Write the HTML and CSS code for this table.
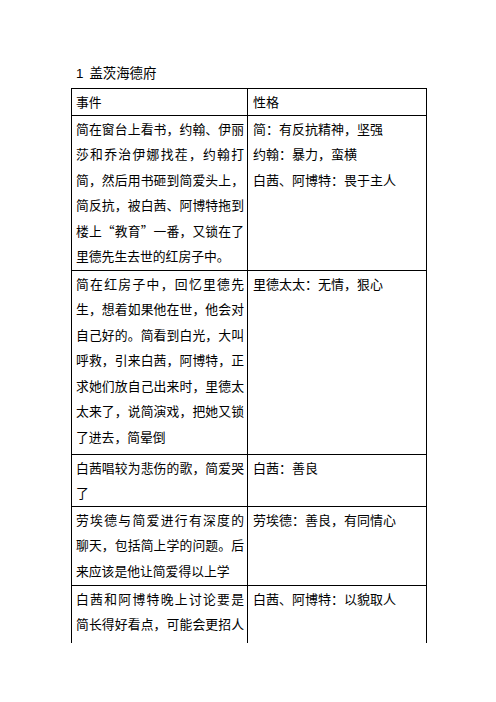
FILE: index.html
```html
<!DOCTYPE html>
<html lang="zh-CN">
<head>
<meta charset="utf-8">
<title>盖茨海德府</title>
<link rel="stylesheet" href="styles.css">
</head>
<body>
<div class="page">
  <p class="title"><span class="num">1</span>盖茨海德府</p>
  <table class="tbl">
    <colgroup><col class="c1"><col class="c2"></colgroup>
    <tr class="rh">
      <td class="ev">事件</td>
      <td class="tr">性格</td>
    </tr>
    <tr class="r1">
      <td class="ev">
        <span class="ln j">简在窗台上看书，约翰、伊丽</span>
        <span class="ln j">莎和乔治伊娜找茬，约翰打</span>
        <span class="ln j">简，然后用书砸到简爱头上，</span>
        <span class="ln j">简反抗，被白茜、阿博特拖到</span>
        <span class="ln j">楼上“教育”一番，又锁在了</span>
        <span class="ln">里德先生去世的红房子中。</span>
      </td>
      <td class="tr">
        <span class="ln">简：有反抗精神，坚强</span>
        <span class="ln">约翰：暴力，蛮横</span>
        <span class="ln">白茜、阿博特：畏于主人</span>
      </td>
    </tr>
    <tr class="r2">
      <td class="ev">
        <span class="ln j">简在红房子中，回忆里德先</span>
        <span class="ln j">生，想着如果他在世，他会对</span>
        <span class="ln j">自己好的。简看到白光，大叫</span>
        <span class="ln j">呼救，引来白茜，阿博特，正</span>
        <span class="ln j">求她们放自己出来时，里德太</span>
        <span class="ln j">太来了，说简演戏，把她又锁</span>
        <span class="ln">了进去，简晕倒</span>
      </td>
      <td class="tr">
        <span class="ln">里德太太：无情，狠心</span>
      </td>
    </tr>
    <tr class="r3">
      <td class="ev">
        <span class="ln j">白茜唱较为悲伤的歌，简爱哭</span>
        <span class="ln">了</span>
      </td>
      <td class="tr">
        <span class="ln">白茜：善良</span>
      </td>
    </tr>
    <tr class="r4">
      <td class="ev">
        <span class="ln j">劳埃德与简爱进行有深度的</span>
        <span class="ln j">聊天，包括简上学的问题。后</span>
        <span class="ln">来应该是他让简爱得以上学</span>
      </td>
      <td class="tr">
        <span class="ln">劳埃德：善良，有同情心</span>
      </td>
    </tr>
    <tr class="r5">
      <td class="ev">
        <span class="ln j">白茜和阿博特晚上讨论要是</span>
        <span class="ln j">简长得好看点，可能会更招人</span>
      </td>
      <td class="tr">
        <span class="ln">白茜、阿博特：以貌取人</span>
      </td>
    </tr>
  </table>
</div>
</body>
</html>
```
FILE: styles.css
```css
html, body {
  margin: 0;
  background: #ffffff;
  color: #000000;
  font-family: "Noto Sans CJK SC", "Noto Sans", sans-serif;
}

.page {
  padding: 62px 0 0 71px;
}

.title {
  margin: 0 0 4px;
  padding-left: 5px;
  font-size: 13.4px;
  line-height: 20px;
}

.num {
  font-family: "Liberation Sans", sans-serif;
  margin-right: 6px;
}

.tbl {
  border-collapse: collapse;
  table-layout: fixed;
  width: 355px;
  font-size: 12.8px;
  line-height: 25.5px;
}

.c1 { width: 176px; }
.c2 { width: 179px; }

.tbl td {
  border: 1px solid #000000;
  padding: 0 3px 0 4px;
  vertical-align: top;
}

.tbl td.tr {
  padding-left: 5px;
  font-size: 13px;
}

.rh { height: 26px; }
.r1 { height: 155px; }
.r2 { height: 184px; }
.r3 { height: 52px; }
.r4 { height: 79px; }
.r5 { height: 58px; }

.r5 td {
  border-bottom: none;
}

.ln {
  display: block;
  white-space: nowrap;
}

.j {
  text-align: justify;
  text-align-last: justify;
}
```
